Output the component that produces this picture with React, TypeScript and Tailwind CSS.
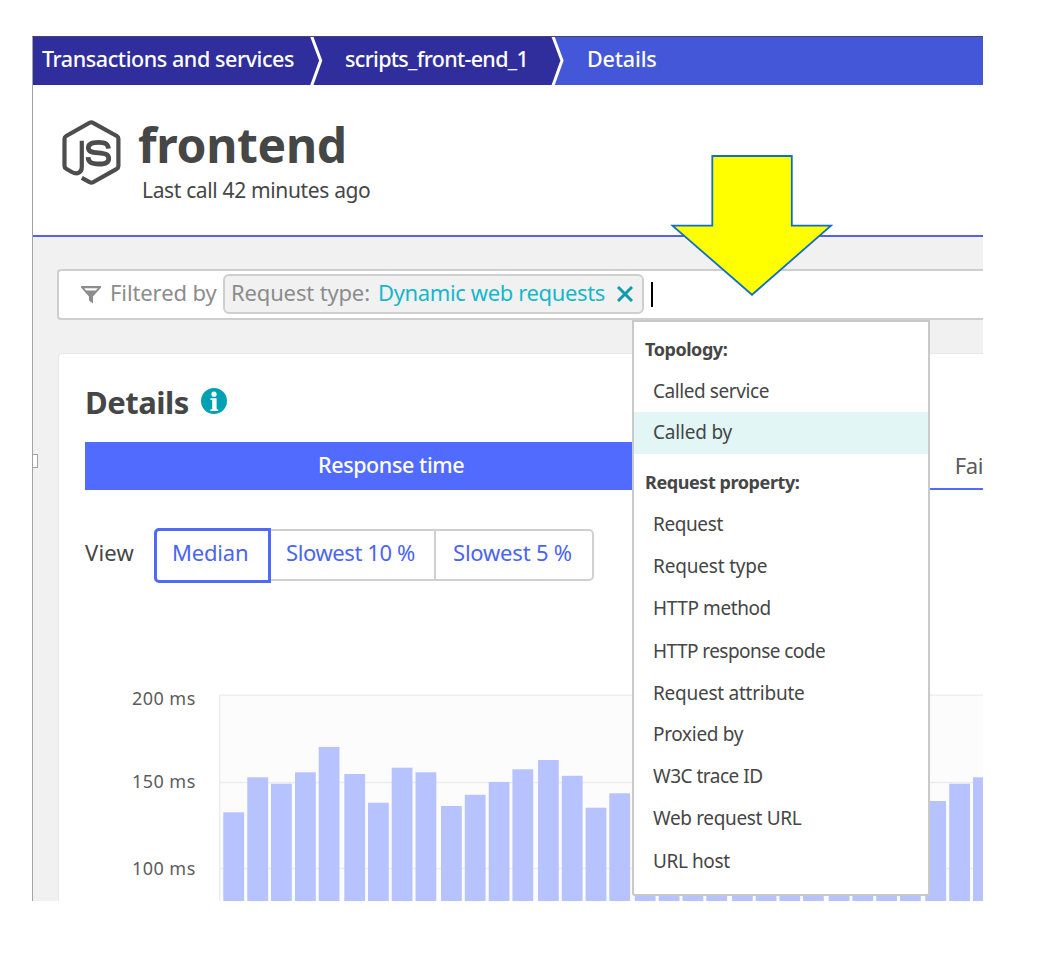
import React from "react";

// Left edge and top edge of every chart column.
const BARS: [number, number][] = [
  [223.3, 812.3], [247.3, 777.3], [271, 783.7], [295, 772.3], [318.7, 747], [344.3, 774], [368, 802.7],
  [391.7, 767.7], [415.5, 772.3], [441, 806], [464.8, 794.8], [488.7, 782], [512.4, 769.3], [538, 760],
  [561.8, 775.8], [585.6, 807.7], [609.3, 793.3], [634.8, 800], [658.7, 790], [682.5, 780], [706.3, 790],
  [732, 800], [755.7, 785], [779.4, 790], [803, 780], [828.7, 795], [852.4, 790], [876.2, 785], [900, 790],
  [925.3, 801], [949.2, 783.7], [973, 777.3],
];

const REQUEST_PROPERTIES: [string, string][] = [
  ["Request", "h-[42px] tracking-[-0.4px]"],
  ["Request type", "h-[42px] tracking-[-0.18px]"],
  ["HTTP method", "h-[43px] tracking-[-0.4px]"],
  ["HTTP response code", "h-[42px] tracking-[-0.55px]"],
  ["Request attribute", "h-[42px] tracking-[-0.25px]"],
  ["Proxied by", "h-[41px] tracking-[-0.32px]"],
  ["W3C trace ID", "h-[42px] tracking-[-0.5px]"],
  ["Web request URL", "h-[43px] tracking-[-0.35px]"],
  ["URL host", "h-[42px] tracking-[-0.4px]"],
];

function NodeLogo() {
  return (
    <svg className="ml-[28px] mt-[34px] h-[68px] w-[62px] shrink-0" viewBox="61 119 62 68" fill="none" stroke="#4d4d4d" strokeWidth="4.2" strokeLinejoin="round">
      <path d="M81.8 177.8 L89.6 182.2 Q91.3 183.2 93 182.2 L116.8 168.8 Q118.4 167.8 118.4 166 V138.8 Q118.4 137 116.8 136 L93 122.8 Q91.3 121.8 89.6 122.8 L66.2 136 Q64.5 137 64.5 138.8 V166 Q64.5 167.8 66.2 168.8 L71.8 172 C77.5 175 81.8 172.5 81.8 167 V140.8" />
      <path strokeWidth="4.8" d="M108.4 148.6 C108 143.8 105.4 142.4 98.6 142.4 C91.6 142.4 88.4 144 88.4 147.7 C88.4 151.5 91.2 152.3 98.2 152.8 C105.6 153.3 108.7 154.4 108.7 158.4 C108.7 162.4 105.4 164 99 164 C91.4 164 88.4 162.4 88.1 157.2" />
    </svg>
  );
}

function Breadcrumbs() {
  return (
    <nav className="relative flex h-[48px] items-center bg-[#4357d8] text-[21.5px] font-medium whitespace-nowrap text-white">
      <svg className="absolute left-0 top-0 h-[48px] w-[540px]" viewBox="33 37 540 48">
        <path d="M33 37H552.5L562 60.5L552.5 85H33Z" fill="#302e9c" />
        <path d="M311.5 36L320.7 60.5L311.5 86" fill="none" stroke="#fff" strokeWidth="3" />
        <path d="M552.8 36L562 60.5L552.8 86" fill="none" stroke="#fff" strokeWidth="3" />
      </svg>
      <span className="relative -mt-[4px] ml-[9px] w-[303px] tracking-[-0.42px]">Transactions and services</span>
      <span className="relative -mt-[4px] w-[242px] tracking-[-0.69px]">scripts_front-end_1</span>
      <span className="relative -mt-[4px] tracking-[-0.15px]">Details</span>
    </nav>
  );
}

function FilterBar() {
  return (
    <div className="ml-[24px] mt-[32px] flex h-[51px] items-center rounded-l-[4px] border-2 border-r-0 border-[#cecece] bg-white text-[22px] whitespace-nowrap text-[#8c8c8c]">
      <svg className="ml-[22px] h-[18px] w-[20px] shrink-0" viewBox="0 0 20 18">
        <path fillRule="evenodd" d="M0 0H20V1.5L12 10.5V17.5L8 14.5V10.5L0 1.5Z M3.2 2.2L5.2 4.4H14.8L16.8 2.2Z" fill="#8c8c8c" />
      </svg>
      <span className="ml-[9px] w-[113px] pb-[4px] tracking-[-0.1px]">Filtered by</span>
      <div className="mb-px flex h-[40px] w-[421px] items-center rounded-[6px] border-2 border-[#cfcfcf] bg-[#f1f1f1] pl-[6px]">
        <span className="w-[147px] pb-[3px] tracking-[-0.15px]">Request type:</span>
        <span className="w-[239px] pb-[3px] tracking-[-0.37px] text-[#14b8ca]">Dynamic web requests</span>
        <svg className="h-[16px] w-[16px]" viewBox="0 0 16 16">
          <path d="M1 1L15 15M15 1L1 15" stroke="#0d9cab" strokeWidth="3" />
        </svg>
      </div>
      <i className="mb-px ml-[7px] h-[25px] w-[2px] bg-black" />
    </div>
  );
}

function Chart() {
  return (
    <div className="flex">
      <div className="mt-[101px] w-[160px] shrink-0 pl-[73px] text-[18px] leading-[28px] tracking-[0.45px] whitespace-nowrap text-[#5c5c5c]">
        <p className="h-[83px]">200 ms</p>
        <p className="h-[87px]">150 ms</p>
        <p>100 ms</p>
      </div>
      <svg className="mt-[111px] h-[208px] w-[765px] shrink-0" viewBox="219 694 765 208">
        <rect x="219" y="695" width="765" height="207" fill="#fcfcfc" />
        <path d="M219.7 902V695.2H984M219 782.5H984M219 868.5H984" fill="none" stroke="#ececec" strokeWidth="1.3" />
        {BARS.map(([x, y]) => (
          <rect key={x} x={x} y={y} width="20.8" height={902 - y} fill="#b7c3ff" />
        ))}
      </svg>
    </div>
  );
}

function FilterMenu() {
  return (
    <div className="absolute left-[599px] top-[283px] h-[576px] w-[298px] rounded-b-[3px] border-2 border-[#c9c9c9] bg-white pt-[6px] text-[19px] whitespace-nowrap">
      <p className="flex h-[42px] items-center pl-[11px] text-[18px] font-bold tracking-[-0.45px]">Topology:</p>
      <p className="flex h-[42px] items-center pl-[19px] tracking-[-0.42px]">Called service</p>
      <p className="flex h-[42px] items-center bg-[#e1f6f5] pb-[2px] pl-[19px] tracking-[-0.2px]">Called by</p>
      <p className="flex h-[49px] items-center pl-[11px] pt-[8px] text-[18px] font-bold tracking-[-0.42px]">Request property:</p>
      {REQUEST_PROPERTIES.map(([label, cls]) => (
        <p key={label} className={"flex items-center pl-[19px] " + cls}>{label}</p>
      ))}
    </div>
  );
}

export default function App() {
  return (
    <div className="h-[966px] w-[1050px] overflow-hidden bg-white pl-[32px] pt-[36px] font-['Noto_Sans',sans-serif] text-[#454646]">
      <div className="relative h-[865px] w-[951px] overflow-hidden border-l border-t border-l-[#a3a3a3] border-t-[#45456a] bg-[#f1f1f1]">
        <Breadcrumbs />
        <header className="flex h-[152px] border-b-2 border-[#5464de] bg-white">
          <NodeLogo />
          <div className="ml-[15px] flex flex-col whitespace-nowrap">
            <h1 className="mt-[30px] h-[60px] text-[48px] font-bold leading-[60px] tracking-[-0.3px]">frontend</h1>
            <p className="ml-[4px] mt-px h-[28px] text-[21px] leading-[28px] tracking-[-0.35px]">Last call 42 minutes ago</p>
          </div>
        </header>

        <FilterBar />

        <main className="ml-[25px] mt-[33px] h-[560px] rounded-tl-[4px] border-l border-t border-[#e8e8e8] bg-white">
          <div className="ml-[26px] flex h-[88px] items-center">
            <h2 className="mt-[8px] w-[116px] text-[31px] font-bold tracking-[-0.5px]">Details</h2>
            <svg className="mt-[5px] h-[26px] w-[26px]" viewBox="0 0 26 26">
              <circle cx="13" cy="13" r="13" fill="#00a1b2" />
              <circle cx="13" cy="6.2" r="2.6" fill="#fff" />
              <path d="M9.4 10.3H15.6V21L17.2 21.4V23H9.4V21.4L11.2 21V12.2L9.4 11.8Z" fill="#fff" />
            </svg>
          </div>
          <div className="ml-[26px] flex h-[48px] text-[22px] whitespace-nowrap">
            <div className="flex w-[614px] items-center bg-[#516aff] pb-[2px] pl-[233px] text-[21.5px] font-medium tracking-[-0.4px] text-white">Response time</div>
            <div className="flex flex-1 items-center border-b-2 border-[#516aff] pl-[257px] tracking-[-0.4px] text-[#5a5a5a]">Fai</div>
          </div>
          <div className="ml-[26px] mt-[38px] flex h-[55px] text-[22px] whitespace-nowrap">
            <span className="flex w-[69px] items-center pb-[7px] tracking-[0.2px]">View</span>
            <div className="flex text-[#4a64f6]">
              <span className="flex w-[117px] items-center rounded-l-[5px] border-[3px] border-[#4f6af8] pb-[7px] pl-[15px] tracking-[-0.2px]">Median</span>
              <span className="mb-[2px] mt-px flex w-[165px] items-center border-y-2 border-r-2 border-[#d0d0d0] pb-[6px] pl-[15px] tracking-[-0.4px]">Slowest 10 %</span>
              <span className="mb-[2px] mt-px flex w-[158px] items-center rounded-r-[5px] border-y-2 border-r-2 border-[#d0d0d0] pb-[6px] pl-[17px] tracking-[-0.2px]">Slowest 5 %</span>
            </div>
          </div>
          <Chart />
        </main>

        <i className="absolute left-[-1px] top-[417px] h-[14px] w-[6px] border border-l-0 border-[#a3a3a3] bg-white" />

        <FilterMenu />

        <svg className="absolute left-[635px] top-[115px] h-[150px] w-[168px]" viewBox="668 152 168 150">
          <path d="M712.3 156H791.8V225.6H831L752 294.8L672.5 225.6H712.3Z" fill="#ff0" stroke="#0f6fc6" strokeWidth="1.8" />
        </svg>
      </div>
    </div>
  );
}
